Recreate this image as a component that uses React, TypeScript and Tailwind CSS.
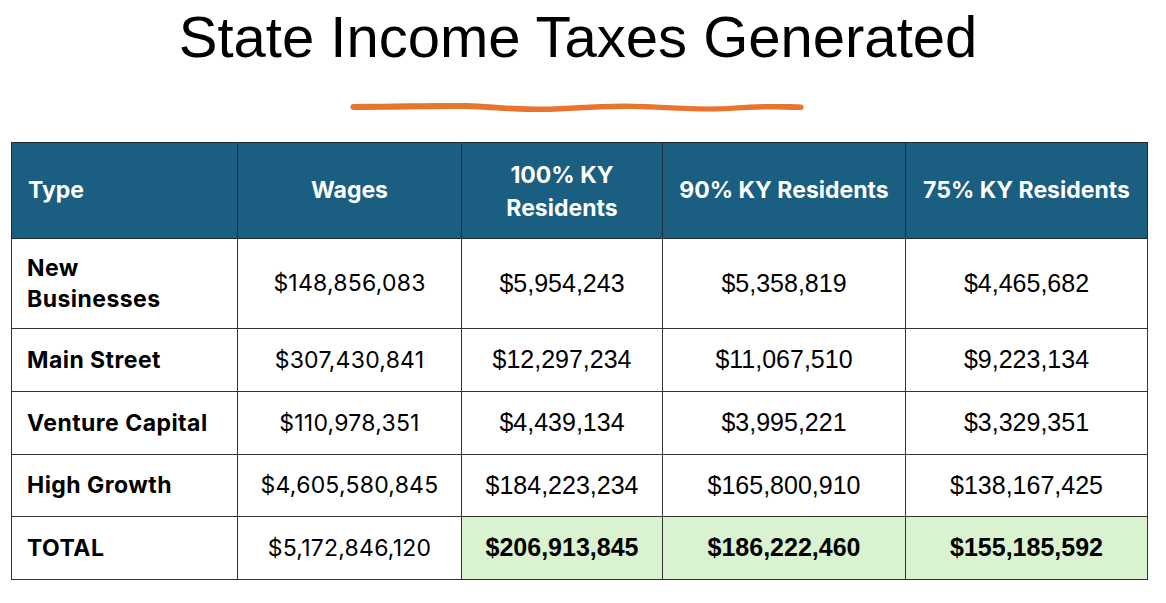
import React from "react"

const ARIAL = "font-['Liberation_Sans','Arial',sans-serif]"
const APTOS = "font-['Inter','Open_Sans',sans-serif]"

type Row = {
  label: string
  wages: string
  full: string
  ninety: string
  seventyFive: string
  h: string
  total?: boolean
}

const rows: Row[] = [
  { label: "New Businesses", wages: "$148,856,083", full: "$5,954,243", ninety: "$5,358,819", seventyFive: "$4,465,682", h: "h-[90px]" },
  { label: "Main Street", wages: "$307,430,841", full: "$12,297,234", ninety: "$11,067,510", seventyFive: "$9,223,134", h: "h-[63px]" },
  { label: "Venture Capital", wages: "$110,978,351", full: "$4,439,134", ninety: "$3,995,221", seventyFive: "$3,329,351", h: "h-[63px]" },
  { label: "High Growth", wages: "$4,605,580,845", full: "$184,223,234", ninety: "$165,800,910", seventyFive: "$138,167,425", h: "h-[62px]" },
  { label: "TOTAL", wages: "$5,172,846,120", full: "$206,913,845", ninety: "$186,222,460", seventyFive: "$155,185,592", h: "h-[63px]", total: true },
]

// hand-drawn orange underline under the title
function Squiggle() {
  return (
    <svg width="456" height="12" viewBox="0 0 456 12" className="block">
      <path
        d="M4 3 C 40 2.5, 80 2, 110 2 C 135 2, 150 5, 185 5.5 C 215 6, 240 2.5, 275 2.5 C 305 2.5, 330 5.5, 360 5.5 C 385 5.5, 395 3, 420 3 C 435 3, 445 3, 452 3.5 C 455.5 4, 455.5 8.5, 452 9 C 440 9, 430 8.5, 420 8.5 C 395 8.5, 385 10.5, 360 10.5 C 330 10.5, 305 8, 275 8 C 240 8, 215 11.5, 185 11 C 150 10.5, 135 8, 110 8 C 80 8, 40 9, 4 9 C 0.5 8.5, 0.5 3.5, 4 3 Z"
        fill="#e8742f"
      />
    </svg>
  )
}

export default function App() {
  return (
    <div className="w-[1166px] h-[603px] bg-white flex flex-col">
      <h1 className={`${ARIAL} text-[58px] leading-none text-black text-center mt-[8px] h-[58px] ml-[-10px]`}>
        State Income Taxes Generated
      </h1>
      <div className="flex justify-center mt-[35px] ml-[-13px]">
        <Squiggle />
      </div>
      <table className="ml-[11px] mt-[29px] w-[1136px] border-collapse table-fixed">
        <colgroup>
          <col className="w-[226px]" />
          <col className="w-[224px]" />
          <col className="w-[201px]" />
          <col className="w-[243px]" />
          <col className="w-[242px]" />
        </colgroup>
        <thead>
          <tr className={`${APTOS} h-[96px] bg-[#1a5e82] text-white text-[23px] font-bold`}>
            <th className="border border-[#1d2b36] text-left pl-[16px] font-bold">Type</th>
            <th className="border border-[#1d2b36] text-center font-bold">Wages</th>
            <th className="border border-[#1d2b36] text-center leading-[33px] pt-[3px] font-bold">
              100% KY
              <br />
              Residents
            </th>
            <th className="border border-[#1d2b36] text-center font-bold">90% KY Residents</th>
            <th className="border border-[#1d2b36] text-center font-bold">75% KY Residents</th>
          </tr>
        </thead>
        <tbody className="text-black">
          {rows.map(r => (
            <tr key={r.label} className={r.h}>
              <td className={`${APTOS} border border-[#333333] pl-[15px] pr-2 text-[23px] leading-[31px] tracking-[0.02em] font-bold`}>
                {r.label === "New Businesses" ? (
                  <>
                    New
                    <br />
                    Businesses
                  </>
                ) : (
                  r.label
                )}
              </td>
              <td className={`${APTOS} border border-[#333333] text-center text-[23px] tracking-[0.01em]`}>{r.wages}</td>
              {[r.full, r.ninety, r.seventyFive].map((v, i) => (
                <td
                  key={i}
                  className={`${ARIAL} border border-[#333333] text-center text-[25px] ${
                    r.total ? "bg-[#d9f2d0] font-bold" : ""
                  }`}
                >
                  {v}
                </td>
              ))}
            </tr>
          ))}
        </tbody>
      </table>
    </div>
  )
}
